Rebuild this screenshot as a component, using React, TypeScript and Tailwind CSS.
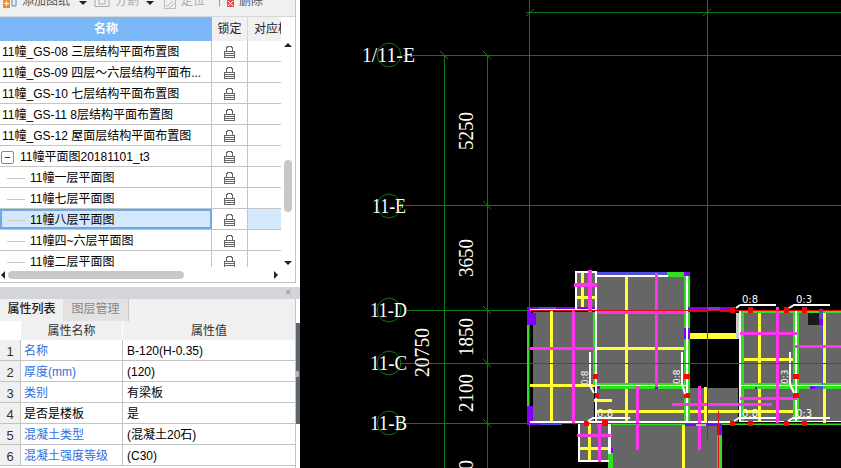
const font = { fontFamily: '"Liberation Sans", "Noto Sans CJK SC", sans-serif' };

const files = [
  "11幢_GS-08 三层结构平面布置图",
  "11幢_GS-09 四层～六层结构平面布...",
  "11幢_GS-10 七层结构平面布置图",
  "11幢_GS-11 8层结构平面布置图",
  "11幢_GS-12 屋面层结构平面布置图",
];
const floors = ["11幢一层平面图", "11幢七层平面图", "11幢八层平面图", "11幢四~六层平面图", "11幢二层平面图"];
const props = [
  ["1", "名称", "B-120(H-0.35)", true],
  ["2", "厚度(mm)", "(120)", true],
  ["3", "类别", "有梁板", true],
  ["4", "是否是楼板", "是", false],
  ["5", "混凝土类型", "(混凝土20石)", true],
  ["6", "混凝土强度等级", "(C30)", true],
] as const;

const Lock = () => (
  <svg width="11" height="12" viewBox="0 0 11 12" fill="none" stroke="#666" strokeWidth="1" shapeRendering="crispEdges">
    <path d="M2.5 5V2L4 .5H7L8.5 2V5" />
    <rect x="0.5" y="5.5" width="10" height="6" />
    <path d="M1 7.5H10M1 9.5H10" />
  </svg>
);

const Arrow = ({ d, w = 8, h = 8 }: { d: string; w?: number; h?: number }) => (
  <svg width={w} height={h} viewBox={`0 0 ${w} ${h}`} className="shrink-0">
    <path d={d} fill="#222" />
  </svg>
);

const Row = ({ children, active }: { children: React.ReactNode; active?: boolean }) => (
  <div className="flex h-[21px] shrink-0 border-b border-[#c4c4c4]">
    <div className={`w-[212px] shrink-0 overflow-hidden whitespace-nowrap border-r border-[#c4c4c4] text-[12px] leading-[22px] ${active ? "bg-[#d3e8fc] outline-2 -outline-offset-2 outline-[#6aa9e6]" : ""}`}>
      {children}
    </div>
    <div className="flex w-[36px] shrink-0 items-center justify-center border-r border-[#c4c4c4] pr-[1px] pt-[1px]">
      <Lock />
    </div>
    <div className={`flex-1 ${active ? "bg-[#d3e8fc]" : ""}`} />
  </div>
);

const Toolbar = () => (
  <div className="flex h-[16px] shrink-0 items-start overflow-hidden bg-[#f0f0f0] text-[12px] leading-[12px] text-[#555]">
    <svg width="14" height="9" viewBox="0 0 14 9" className="ml-[3px] shrink-0">
      <rect x="0" y="0" width="7" height="8" fill="#f0902a" />
      <path d="M1 3.5H6M3.5 1V6" stroke="#fff" />
      <path d="M9 0V6H13V0" stroke="#5588cc" fill="none" />
    </svg>
    <span className="-mt-[5px] ml-[5px] whitespace-nowrap">添加图纸</span>
    <span className="ml-[9px] mt-[1px]">
      <Arrow d="M0 0H8L4 4Z" w={8} h={4} />
    </span>
    <svg width="16" height="7" viewBox="0 0 16 7" className="ml-[7px] shrink-0" fill="none" stroke="#aaa">
      <path d="M1 0V6.5H15V0M5 0V4H11V0" />
    </svg>
    <span className="-mt-[5px] ml-[5px] whitespace-nowrap text-[#aaa]">分割</span>
    <span className="ml-[7px] mt-[1px]">
      <Arrow d="M0 0H8L4 4Z" w={8} h={4} />
    </span>
    <svg width="12" height="9" viewBox="0 0 12 9" className="ml-[10px] shrink-0" fill="none" stroke="#bbb">
      <path d="M.5 0V8.5H11.5V0M2 7L9 1M5 8L11 3" />
    </svg>
    <span className="-mt-[5px] ml-[5px] whitespace-nowrap text-[#aaa]">定位</span>
    <svg width="15" height="7" viewBox="0 0 15 7" className="ml-[14px] shrink-0">
      <path d="M.5 0V6.5" stroke="#999" />
      <rect x="8" y="0" width="7" height="7" fill="#d9534f" />
      <path d="M9 1L14 6M14 1L9 6" stroke="#fff" />
    </svg>
    <span className="-mt-[5px] ml-[5px] whitespace-nowrap">删除</span>
  </div>
);

const FileList = () => (
  <div className="flex h-[251px] shrink-0 flex-col bg-white">
    <div className="flex h-[25px] shrink-0 border-t border-[#d8d8d8] text-[12px] leading-[24px]">
      <div className="w-[212px] shrink-0 bg-[#7ab8f7] text-center font-bold text-white">名称</div>
      <div className="w-[36px] shrink-0 border-r border-[#d8d8d8] bg-[#f0f0f0] text-center text-[#222]">锁定</div>
      <div className="w-[33px] shrink-0 overflow-hidden whitespace-nowrap bg-[#f0f0f0] pl-[6px] text-[#222]">对应楼</div>
      <div className="flex-1 bg-white" />
    </div>
    <div className="flex min-h-0 flex-1">
      <div className="h-[226px] w-[281px] shrink-0 overflow-hidden">
        <div className="flex h-[226px] flex-col overflow-hidden">
          {files.map((f) => (
            <Row key={f}>
              <span className="pl-[2px] text-black">{f}</span>
            </Row>
          ))}
          <Row>
            <span className="flex items-center text-black">
              <span className="ml-[1px] mr-[6px] flex h-[13px] w-[13px] items-center justify-center rounded-[2px] border border-[#888] text-[11px] leading-none">
                −
              </span>
              11幢平面图20181101_t3
            </span>
          </Row>
          {floors.map((f, i) => (
            <Row key={f} active={i === 2}>
              <span className="flex items-center text-black">
                <span className="ml-[7px] mr-[5px] h-px w-[18px] bg-[#c8c8c8]" />
                {f}
              </span>
            </Row>
          ))}
        </div>
      </div>
      <div className="flex h-[226px] flex-1 flex-col items-center bg-white pt-[2px] pr-[1px]">
        <Arrow d="M0 4H8L4 0Z" w={8} h={4} />
        <div className="mt-[113px] h-[52px] w-[8px] shrink-0 rounded-full bg-[#c8c8c8]" />
        <div className="mt-auto mb-[2px]">
          <Arrow d="M0 0H8L4 4Z" w={8} h={4} />
        </div>
      </div>
    </div>
  </div>
);

const HScroll = () => (
  <div className="flex h-[15px] shrink-0 items-center bg-white pl-[1px]">
    <Arrow d="M4 0V8L0 4Z" w={4} h={8} />
    <div className="ml-[3px] h-[8px] w-[176px] rounded-full bg-[#c8c8c8]" />
    <div className="ml-[90px]">
      <Arrow d="M0 0V8L4 4Z" w={4} h={8} />
    </div>
  </div>
);

const PropertyPanel = () => (
  <div className="flex min-h-0 flex-1 flex-col bg-white">
    <div className="flex h-[12px] shrink-0 items-center justify-end bg-[#d4d5d9] pr-[9px] text-[10px] leading-none text-[#888]">×</div>
    <div className="flex min-h-0 flex-1">
      <div className="w-[296px] shrink-0 overflow-hidden border-r border-[#c4c4c4]">
        <div className="flex h-[22px] bg-[#f0f0f0] text-[12px] leading-[21px]">
          <div className="w-[63px] text-center font-medium text-[#222]">属性列表</div>
          <div className="w-[66px] border-r border-[#c8c8c8] bg-[#e2e2e2] text-center text-[#888]">图层管理</div>
        </div>
        <div className="flex h-[19px] text-[12px] leading-[20px] text-[#333]">
          <div className="w-[21px] bg-white" />
          <div className="w-[102px] border-r border-white bg-[#f0f0f0] text-center">属性名称</div>
          <div className="w-[172px] bg-[#f0f0f0] text-center">属性值</div>
        </div>
        {props.map(([n, k, v, link]) => (
          <div key={n} className="flex h-[21px] border-b border-[#c4c4c4] text-[12px] leading-[23px]">
            <div className="w-[21px] border-r border-[#c4c4c4] bg-[#f0f0f0] text-center text-[13px] text-[#333]">{n}</div>
            <div className={`w-[102px] border-r border-[#c4c4c4] pl-[3px] ${link ? "text-[#2f6fe0]" : "text-black"}`}>{k}</div>
            <div className="w-[172px] pl-[4px] text-black">{v}</div>
          </div>
        ))}
      </div>
      <div className="mt-[24px] flex h-[101px] w-[4px] items-center bg-[#5c6670]">
        <div className="h-[6px] w-[3px] bg-[#b0b4b8]" />
      </div>
    </div>
  </div>
);

type R = number[];

const slabs: R[] = [
  [533, 312, 61, 110],
  [597, 276, 88, 110],
  [577, 273, 18, 37],
  [597, 388, 141, 34],
  [612, 425, 105, 43],
  [580, 424, 28, 36],
  [744, 312, 50, 110],
  [798, 312, 43, 110],
];
const green: R[] = [
  [527, 325, 3, 82], [593, 312, 2, 73], [597, 383, 90, 2], [597, 386, 90, 3], [684, 276, 2, 147], [688, 276, 2, 147],
  [667, 272, 23, 5], [741, 311, 3, 111], [744, 310, 50, 3], [793, 311, 2, 111], [797, 311, 2, 111], [799, 310, 42, 3],
  [741, 383, 100, 2], [741, 386, 100, 3], [688, 423, 153, 2], [597, 423, 91, 2], [608, 453, 5, 15], [717, 435, 5, 33],
];
const yellow: R[] = [
  [550, 310, 3, 113], [625, 273, 3, 150], [581, 271, 3, 39], [577, 296, 19, 3], [597, 347, 90, 3], [530, 384, 65, 3],
  [597, 410, 200, 3], [704, 387, 3, 36], [682, 423, 3, 45], [588, 423, 3, 37], [579, 447, 30, 3], [690, 333, 47, 6],
  [758, 310, 3, 112], [742, 358, 53, 3], [823, 310, 3, 113], [797, 383, 44, 3], [797, 383, 13, 6], [594, 399, 18, 3],
];
const blue: R[] = [
  [597, 272, 70, 3], [538, 307, 18, 3], [541, 422, 21, 3], [708, 307, 12, 3], [608, 423, 4, 30], [822, 325, 1, 61],
  [819, 309, 4, 10], [815, 386, 8, 3],
];
const purple: R[] = [
  [527, 307, 4, 18], [531, 313, 5, 12], [531, 307, 7, 3], [556, 307, 40, 3], [688, 307, 20, 5], [720, 307, 15, 5],
  [684, 272, 6, 4], [684, 328, 6, 11], [527, 406, 6, 19], [533, 422, 8, 3], [685, 423, 32, 3], [717, 423, 5, 12],
  [819, 319, 4, 6], [810, 386, 5, 3], [608, 448, 5, 5], [597, 386, 3, 3], [655, 387, 3, 2], [755, 387, 2, 2],
];
const white: R[] = [
  [530, 309, 65, 2], [530, 421, 205, 2], [575, 271, 2, 40], [575, 271, 22, 2], [595, 271, 2, 152], [597, 275, 71, 2],
  [686, 276, 2, 147], [589, 352, 2, 33], [681, 352, 2, 33], [789, 352, 2, 33], [739, 311, 2, 111], [795, 311, 2, 111],
  [597, 385, 90, 1], [741, 385, 100, 1], [578, 424, 2, 37], [578, 460, 31, 2], [608, 424, 3, 30],
  [740, 304, 36, 2], [793, 304, 37, 2], [592, 417, 38, 2], [738, 417, 38, 2], [792, 417, 38, 2], [741, 421, 100, 1],
];
const magenta: R[] = [
  [572, 310, 3, 114], [655, 273, 3, 114], [588, 270, 4, 42], [574, 283, 23, 4], [597, 311, 88, 3], [528, 347, 67, 3],
  [636, 386, 3, 64], [698, 386, 3, 64], [672, 403, 100, 3], [776, 307, 3, 116], [740, 332, 57, 3], [795, 345, 46, 3],
  [740, 397, 57, 3], [598, 424, 3, 38], [577, 434, 35, 3],
];
const red: R[] = [
  [730, 307, 5, 6], [748, 307, 5, 6], [784, 307, 5, 6], [802, 307, 5, 6],
  [593, 374, 5, 5], [684, 374, 6, 5], [793, 374, 6, 5],
  [595, 393, 4, 5], [684, 393, 6, 5], [793, 393, 6, 5],
  [584, 421, 5, 5], [602, 420, 6, 6], [730, 421, 5, 5], [748, 421, 5, 5], [784, 421, 5, 5], [802, 421, 5, 5],
];

const Rects = ({ items, fill }: { items: R[]; fill: string }) => (
  <g fill={fill} shapeRendering="crispEdges">
    {items.map(([x, y, w, h]) => (
      <rect key={`${x}-${y}-${w}-${h}`} x={x} y={y} width={w} height={h} />
    ))}
  </g>
);

const axes = [
  { label: "1/11-E", y: 55, tx: 362, len: 53 },
  { label: "11-E", y: 206, tx: 372, len: 34 },
  { label: "11-D", y: 310, tx: 370, len: 37 },
  { label: "11-C", y: 363, tx: 370, len: 37 },
  { label: "11-B", y: 423, tx: 370, len: 37 },
];
const dims = [
  { t: "5250", x: 473, y: 150, len: 38 },
  { t: "3650", x: 473, y: 277, len: 38 },
  { t: "1850", x: 473, y: 356, len: 38 },
  { t: "20750", x: 429, y: 377, len: 49 },
  { t: "2100", x: 473, y: 412, len: 38 },
  { t: "0", x: 473, y: 470, len: 10 },
];
const ticks = [[444, 55], [487, 55], [487, 205], [487, 310], [487, 363], [487, 423]];
const small = [
  { t: "0:8", x: 742, y: 303 }, { t: "0:3", x: 796, y: 303 },
  { t: "0:8", x: 597, y: 417 }, { t: "0:8", x: 742, y: 417 }, { t: "0:3", x: 796, y: 417 },
];
const sideLabels = [
  { t: "0:8", x: 588, y: 385 }, { t: "0:8", x: 680, y: 384 }, { t: "0:3", x: 788, y: 384 },
];
const leaders = [
  "M589 384L594 393", "M682 384L685 394", "M790 384L794 393",
  "M740 305L736 308", "M794 305L789 308", "M593 418L588 421", "M739 418L734 421", "M793 418L788 421",
];

const Drawing = () => (
  <svg className="block h-full w-full" viewBox="300 0 541 468">
    <g stroke="#0a7d0a" strokeWidth="1" shapeRendering="crispEdges" fill="none">
      <path d="M444.5 55V468M487.5 55V468M529.5 0V55M707.5 0V55M526 12.5H841M403 55.5H529M403 205.5H529M407 310.5H529M400 363.5H529M405 423.5H529" />
    </g>
    <g stroke="#0a7d0a" strokeWidth="1" fill="none">
      {ticks.map(([x, y]) => (
        <path key={`${x}-${y}`} d={`M${x - 4} ${y - 4}L${x + 4} ${y + 4}`} />
      ))}
      <path d="M526 16L534 9M703 16L711 9" />
      {axes.map((a) => (
        <polygon
          key={a.label}
          points={[0, 1, 2, 3, 4, 5, 6, 7, 8, 9, 10, 11]
            .map((i) => {
              const ang = (Math.PI / 6) * i - Math.PI / 2;
              return `${389 + 12 * Math.cos(ang)},${a.y + 12 * Math.sin(ang)}`;
            })
            .join(" ")}
        />
      ))}
    </g>
    <Rects items={slabs} fill="#666666" />
    <Rects items={yellow} fill="#ffff33" />
    <Rects items={green} fill="#33dd22" />
    <Rects items={blue} fill="#5050dd" />
    <Rects items={purple} fill="#8000ff" />
    <Rects items={white} fill="#ffffff" />
    <Rects items={magenta} fill="#ff33ee" />
    <rect x="808" y="313" width="11" height="12" fill="#1a1a1a" />
    <rect x="736" y="313" width="3" height="26" fill="#cccccc" />
    <rect x="696" y="423" width="10" height="3" fill="#bbbbbb" />
    <Rects items={red} fill="#ff0000" />
    <path d={leaders.join("")} stroke="#fff" strokeWidth="2" fill="none" />
    <path
      d="M529.5 55V468M707.5 55V440M718.5 411V468M529 55.5H841M529 205.5H841M529 310.5H841M529 363.5H841M529 423.5H841"
      stroke="#e01010"
      strokeWidth="1"
      shapeRendering="crispEdges"
      fill="none"
    />
    <g fill="#fff">
      {axes.map((a) => (
        <text key={a.label} x={a.tx} y={a.y + 7} fontSize="21" fontFamily='"Liberation Serif", serif' textLength={a.len} lengthAdjust="spacingAndGlyphs">
          {a.label}
        </text>
      ))}
      {dims.map((d) => (
        <text
          key={d.t}
          x={d.x}
          y={d.y}
          fontSize="21"
          fontFamily='"Liberation Serif", serif'
          textLength={d.len}
          lengthAdjust="spacingAndGlyphs"
          transform={`rotate(-90 ${d.x} ${d.y})`}
        >
          {d.t}
        </text>
      ))}
      {small.map((s) => (
        <text key={`${s.x}-${s.y}`} x={s.x} y={s.y} fontSize="10" fontFamily='"DejaVu Sans", sans-serif'>
          {s.t}
        </text>
      ))}
      {sideLabels.map((s) => (
        <text key={s.x} x={s.x} y={s.y} fontSize="9" fontFamily='"DejaVu Sans", sans-serif' transform={`rotate(-90 ${s.x} ${s.y})`}>
          {s.t}
        </text>
      ))}
    </g>
  </svg>
);

export default function App() {
  return (
    <div className="flex h-[468px] w-[841px] overflow-hidden bg-white" style={font}>
      <div className="flex w-[300px] shrink-0 flex-col">
        <div className="flex h-[283px] w-[296px] shrink-0 flex-col border-r border-b border-[#c4c4c4]">
          <Toolbar />
          <FileList />
          <HScroll />
        </div>
        <div className="h-[4px] shrink-0 bg-white" />
        <PropertyPanel />
      </div>
      <div className="min-w-0 flex-1 bg-black">
        <Drawing />
      </div>
    </div>
  );
}
